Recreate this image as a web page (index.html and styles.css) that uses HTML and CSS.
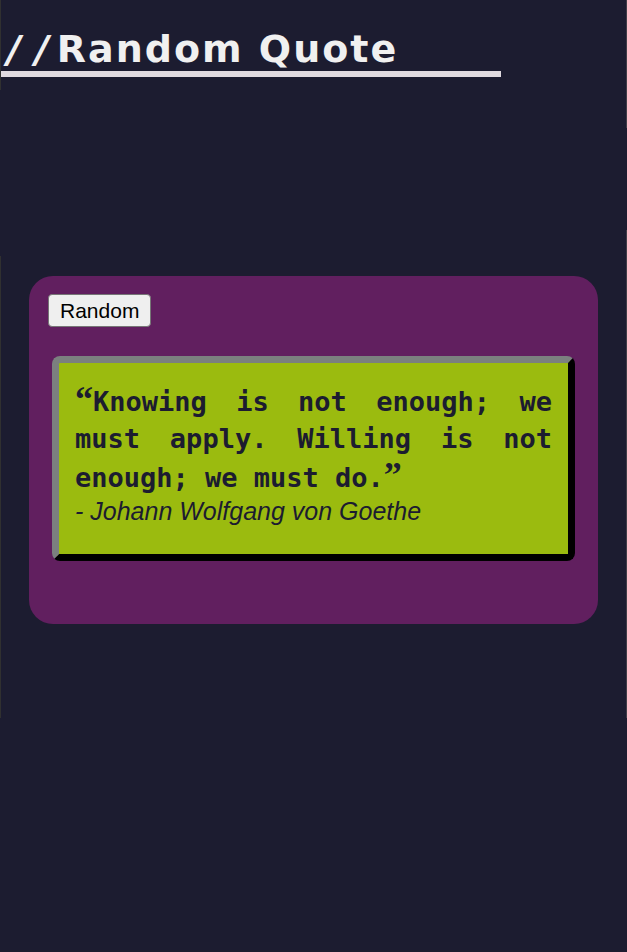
FILE: index.html
```html
<!DOCTYPE html>
<html lang="en">
<head>
  <meta charset="utf-8">
  <meta name="viewport" content="width=device-width, initial-scale=1">
  <title>Random Quote</title>
  <link rel="stylesheet" href="styles.css">
</head>
<body>
  <header class="header">
    <h1 class="title"><span class="slashes">//</span>Random Quote</h1>
  </header>
  <main class="card">
    <button class="random" type="button">Random</button>
    <figure class="quote">
      <blockquote class="text"><span class="mark">“</span>Knowing is not enough; we must apply. Willing is not enough; we must do.<span class="mark">”</span></blockquote>
      <figcaption class="author">- Johann Wolfgang von Goethe</figcaption>
    </figure>
  </main>
</body>
</html>
```

FILE: styles.css
```css
* {
  box-sizing: border-box;
}

/* Hairline edges, broken into segments down each side */
body {
  margin: 0;
  background:
    linear-gradient(#303030 90px, transparent 90px 256px, #303030 256px 718px, transparent 718px) left top / 1px 100vh no-repeat,
    linear-gradient(#403e48 128px, transparent 128px 230px, #403e48 230px 718px, transparent 718px) right top / 1px 100vh no-repeat,
    #1c1c30;
  color: #1c1c30;
  font-family: "Liberation Sans", Arial, sans-serif;
}

.header {
  max-width: 500px;
  margin: 27px 0 199px 1px;
  border-bottom: 6px solid #e0dae0;
}

.title {
  margin: 0;
  color: #f0f0f0;
  font-family: "DejaVu Sans", Verdana, sans-serif;
  font-size: 38px;
  line-height: 44px;
  letter-spacing: 2px;
}

.slashes {
  margin-right: -6px;
  padding-left: 6px;
  font-style: italic;
  letter-spacing: 14px;
}

.card {
  margin: 0 29px;
  padding: 18px 23px 63px;
  border-radius: 24px;
  background: #611f5f;
}

.random {
  display: block;
  height: 33px;
  margin: 0 0 29px -4px;
  padding: 0 11px;
  border: 1px solid #767676;
  border-radius: 4px;
  background: #efefef;
  color: #000;
  font-family: inherit;
  font-size: 21px;
}

.quote {
  margin: 0;
  padding: 18px 16px 28px;
  border: 7px solid;
  border-color: #7b807f #000 #000 #7b807f;
  border-radius: 8px;
  background: #9bbb0f;
}

.text {
  margin: 0;
  font-family: "DejaVu Sans Mono", Consolas, monospace;
  font-size: 27px;
  font-weight: bold;
  line-height: 37px;
  text-align: justify;
}

.mark {
  font-family: "Liberation Serif", serif;
  font-size: 36px;
}

.author {
  font-size: 25px;
  font-style: italic;
  line-height: 30px;
}
```
